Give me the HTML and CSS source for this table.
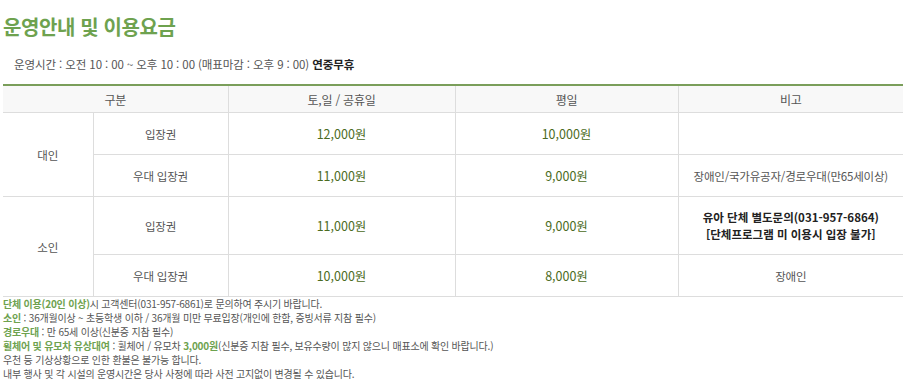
FILE: index.html
```html
<!DOCTYPE html>
<html lang="ko">
<head>
<meta charset="utf-8">
<link rel="stylesheet" href="styles.css">
</head>
<body>
<div class="wrap">
  <h2 class="title">운영안내 및 이용요금</h2>
  <p class="hours">운영시간 : 오전 10 : 00 ~ 오후 10 : 00 (매표마감 : 오후 9 : 00) <strong>연중무휴</strong></p>
  <table class="price">
    <colgroup>
      <col class="c1"><col class="c2"><col class="c3"><col class="c4"><col class="c5">
    </colgroup>
    <thead>
      <tr><th colspan="2">구분</th><th>토,일 / 공휴일</th><th>평일</th><th>비고</th></tr>
    </thead>
    <tbody>
      <tr class="r"><td rowspan="2">대인</td><td>입장권</td><td class="num">12,000원</td><td class="num">10,000원</td><td></td></tr>
      <tr class="r"><td>우대 입장권</td><td class="num">11,000원</td><td class="num">9,000원</td><td>장애인/국가유공자/경로우대(만65세이상)</td></tr>
      <tr class="r tall"><td rowspan="2">소인</td><td>입장권</td><td class="num">11,000원</td><td class="num">9,000원</td><td class="bold">유아 단체 별도문의(031-957-6864)<br>[단체프로그램 미 이용시 입장 불가]</td></tr>
      <tr class="r"><td>우대 입장권</td><td class="num">10,000원</td><td class="num">8,000원</td><td>장애인</td></tr>
    </tbody>
  </table>
  <ul class="notes">
    <li><span class="g">단체 이용(20인 이상)</span>시 고객센터(031-957-6861)로 문의하여 주시기 바랍니다.</li>
    <li><span class="g">소인</span> : 36개월이상 ~ 초등학생 이하 / 36개월 미만 무료입장(개인에 한함, 증빙서류 지참 필수)</li>
    <li><span class="g">경로우대</span> : 만 65세 이상(신분증 지참 필수)</li>
    <li><span class="g">휠체어 및 유모차 유상대여</span> : 휠체어 / 유모차 <span class="g">3,000원</span>(신분증 지참 필수, 보유수량이 많지 않으니 매표소에 확인 바랍니다.)</li>
    <li>우천 등 기상상황으로 인한 환불은 불가능 합니다.</li>
    <li>내부 행사 및 각 시설의 운영시간은 당사 사정에 따라 사전 고지없이 변경될 수 있습니다.</li>
  </ul>
</div>
</body>
</html>
```
FILE: styles.css
```css
html, body { margin: 0; padding: 0; background: #fff; }
body { font-family: "Noto Sans CJK KR", "Noto Sans", sans-serif; color: #555; }
.wrap { padding: 0 3px; }
.title {
  margin: 0;
  padding-top: 13px;
  font-size: 20px;
  line-height: 28px;
  font-weight: 700;
  color: #6ea24f;
  letter-spacing: -0.4px;
}
.hours {
  margin: 0;
  padding: 15px 0 0 11px;
  font-size: 11.5px;
  line-height: 16px;
  color: #555;
  letter-spacing: -0.1px;
}
.hours strong { color: #222; font-weight: 700; }
.price {
  margin-top: 12px;
  width: 900px;
  border-collapse: collapse;
  table-layout: fixed;
  border-top: 2px solid #7a9e5a;
  font-size: 11.5px;
  letter-spacing: -0.2px;
}
.c1 { width: 90px; }
.c2 { width: 135px; }
.c3 { width: 227px; }
.c4 { width: 223px; }
.c5 { width: 225px; }
.price th {
  background: #f8f8f8;
  font-weight: 400;
  color: #555;
  height: 26px;
  padding: 0;
  border-bottom: 1px solid #ddd;
  border-left: 1px solid #ddd;
  font-size: 12px;
}
.price th:first-child { border-left: 0; }
.price td {
  text-align: center;
  padding: 0;
  border-bottom: 1px solid #ddd;
  border-left: 1px solid #ddd;
  color: #555;
}
.price td[rowspan] { border-left: 0; }
.price .r td { height: 41px; }
.price .r.tall td { height: 57px; }
.price .num { color: #4b6b22; font-size: 12.5px; letter-spacing: 0; }
.price .bold { color: #222; font-weight: 700; line-height: 17px; letter-spacing: 0; }
.notes {
  list-style: none;
  margin: 0;
  padding: 0;
  font-size: 10px;
  line-height: 14px;
  color: #555;
  letter-spacing: -0.2px;
}
.notes .g { color: #6ea24f; font-weight: 700; }
```
